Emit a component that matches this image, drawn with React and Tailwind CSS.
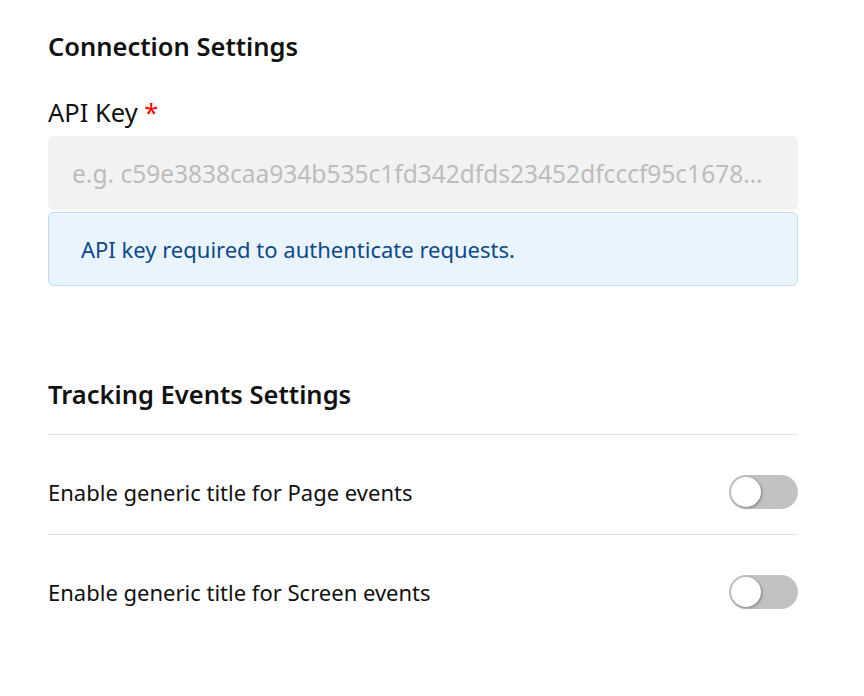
import React, { useState } from 'react';

const Toggle = ({ checked, onChange }) => (
    <button
        type="button"
        onClick={() => onChange(!checked)}
        className={`relative w-[69px] h-[34px] rounded-full shrink-0 transition-colors ${checked ? 'bg-[#1a73e8]' : 'bg-[#c2c2c2]'}`}
    >
        <span
            className={`absolute top-[2px] left-[2px] w-[30px] h-[30px] rounded-full bg-white shadow-[1px_1px_3px_rgba(0,0,0,0.35)] transition-transform ${checked ? 'translate-x-[35px]' : ''}`}
        />
    </button>
);

const App = () => {
    const [apiKey, setApiKey] = useState('');
    const [pageTitle, setPageTitle] = useState(false);
    const [screenTitle, setScreenTitle] = useState(false);

    return (
        <div className="min-h-screen bg-white font-['Noto_Sans',sans-serif] text-[#111]">
            <div className="w-[750px] ml-12 pt-7">
                {/* Connection */}
                <h2 className="text-[25.5px] leading-[36px] font-semibold">Connection Settings</h2>

                <label className="block mt-[30px] text-[25.5px] leading-[36px]">
                    API Key <span className="text-[#f00]">*</span>
                </label>
                <input
                    type="text"
                    value={apiKey}
                    onChange={(e) => setApiKey(e.target.value)}
                    placeholder="e.g. c59e3838caa934b535c1fd342dfds23452dfcccf95c1678ab23dd4c5a"
                    className="mt-[6px] w-full h-[74px] px-6 rounded-md bg-[#f2f2f2] text-[24.5px] text-ellipsis placeholder:text-[#bdbdbd] focus:outline-none"
                />
                <div className="mt-[2px] h-[74px] flex items-center pl-8 rounded-md border border-[#bcdcfb] bg-[#eaf4fe] text-[22px] text-[#0b4a8a]">
                    API key required to authenticate requests.
                </div>

                {/* Tracking */}
                <h2 className="mt-[90px] text-[25.5px] leading-[36px] font-semibold">Tracking Events Settings</h2>
                <div className="mt-[22px]">
                    <div className="border-t border-[#e2e2e2] h-[100px] pt-[40px] flex items-start justify-between">
                        <span className="text-[22px] leading-[34px]">Enable generic title for Page events</span>
                        <Toggle checked={pageTitle} onChange={setPageTitle} />
                    </div>
                    <div className="border-t border-[#e2e2e2] h-[100px] pt-[40px] flex items-start justify-between">
                        <span className="text-[22px] leading-[34px]">Enable generic title for Screen events</span>
                        <Toggle checked={screenTitle} onChange={setScreenTitle} />
                    </div>
                </div>
            </div>
        </div>
    );
};

export default App;
